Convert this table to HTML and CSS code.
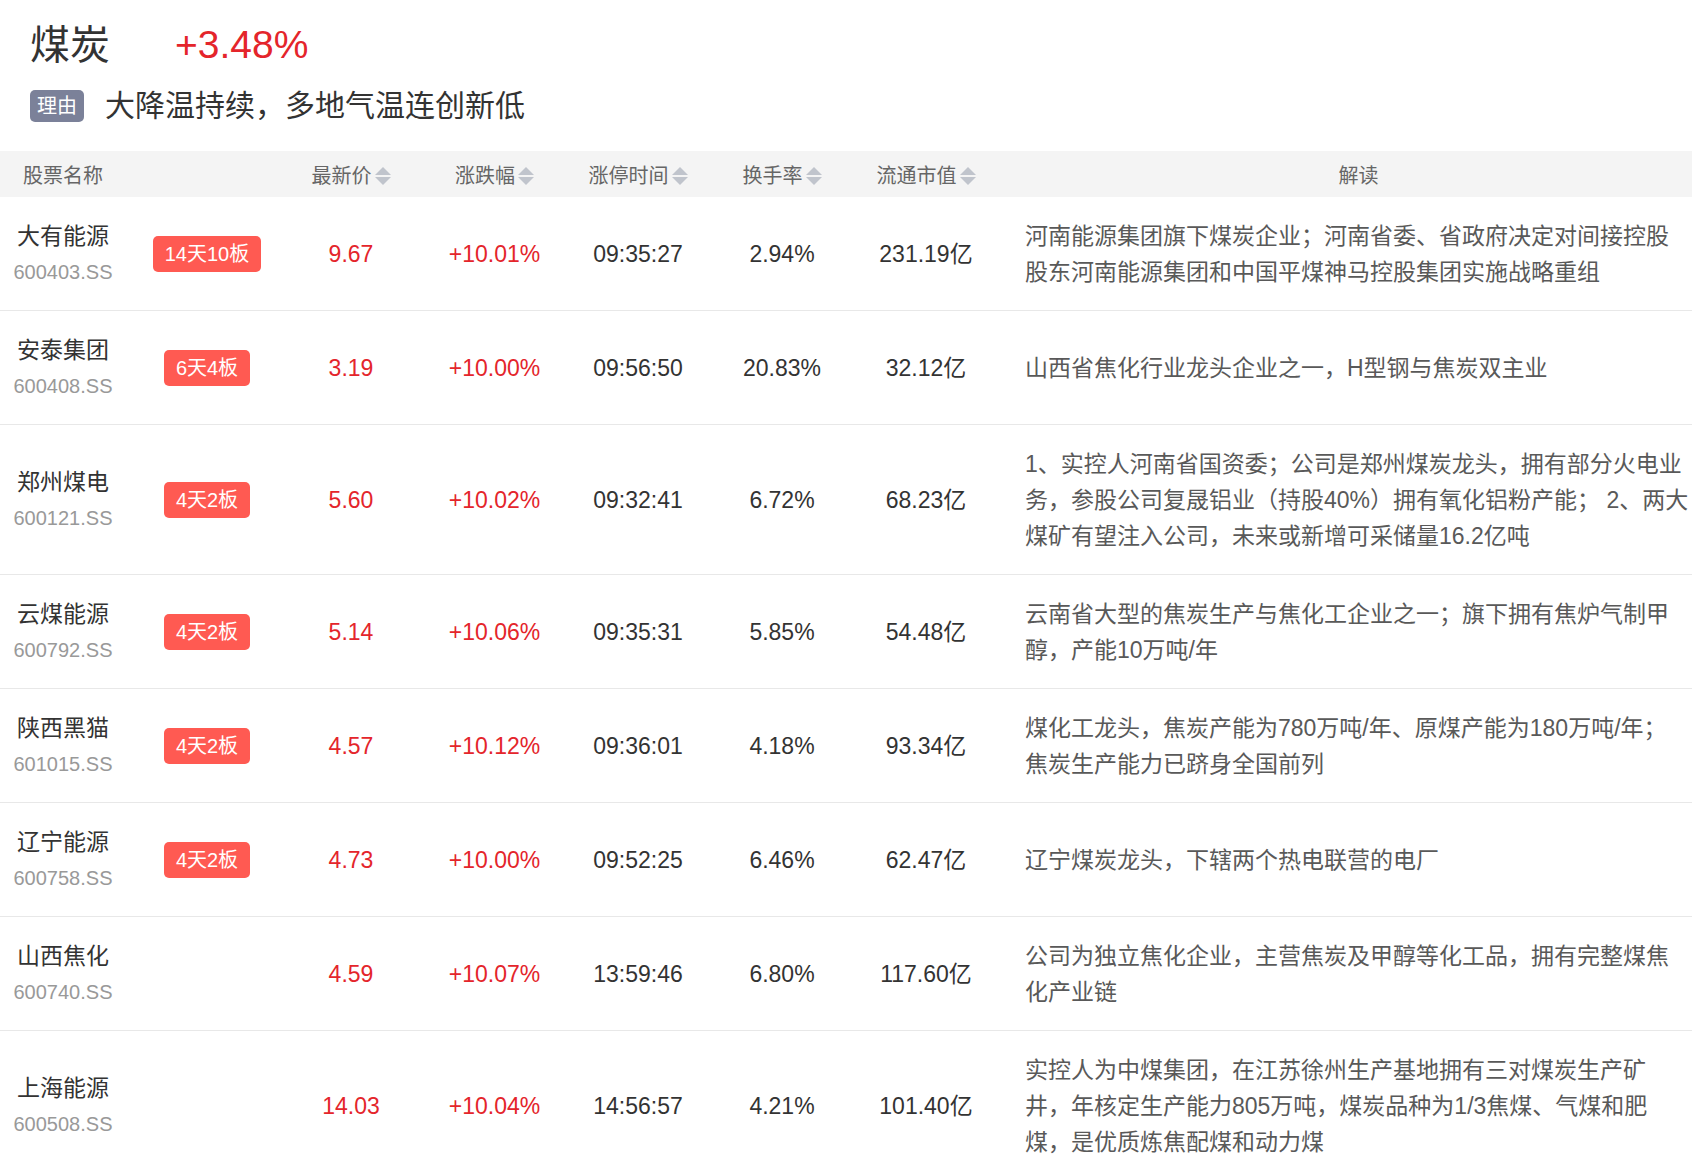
FILE: index.html
```html
<!DOCTYPE html>
<html lang="zh-CN">
<head>
<meta charset="utf-8">
<title>煤炭</title>
<link rel="stylesheet" href="styles.css">
</head>
<body>
<section class="top">
  <div class="title">
    <span class="sector">煤炭</span>
    <span class="pct">+3.48%</span>
  </div>
  <div class="reason">
    <span class="reason-tag">理由</span>
    <span class="reason-text">大降温持续，多地气温连创新低</span>
  </div>
</section>

<section class="table">
  <div class="row head">
    <div class="cell c-name left-head">股票名称</div>
    <div class="cell"></div>
    <div class="cell">最新价<svg class="sort" viewBox="0 0 16 20"><path d="M8 1L16 9H0z"/><path d="M0 11H16L8 19z"/></svg></div>
    <div class="cell">涨跌幅<svg class="sort" viewBox="0 0 16 20"><path d="M8 1L16 9H0z"/><path d="M0 11H16L8 19z"/></svg></div>
    <div class="cell">涨停时间<svg class="sort" viewBox="0 0 16 20"><path d="M8 1L16 9H0z"/><path d="M0 11H16L8 19z"/></svg></div>
    <div class="cell">换手率<svg class="sort" viewBox="0 0 16 20"><path d="M8 1L16 9H0z"/><path d="M0 11H16L8 19z"/></svg></div>
    <div class="cell">流通市值<svg class="sort" viewBox="0 0 16 20"><path d="M8 1L16 9H0z"/><path d="M0 11H16L8 19z"/></svg></div>
    <div class="cell c-desc-head">解读</div>
  </div>

  <div class="row">
    <div class="cell c-name"><div class="stock">大有能源</div><div class="code">600403.SS</div></div>
    <div class="cell"><span class="badge">14天10板</span></div>
    <div class="cell red">9.67</div>
    <div class="cell red">+10.01%</div>
    <div class="cell">09:35:27</div>
    <div class="cell">2.94%</div>
    <div class="cell">231.19亿</div>
    <div class="cell c-desc">河南能源集团旗下煤炭企业；河南省委、省政府决定对间接控股<br>股东河南能源集团和中国平煤神马控股集团实施战略重组</div>
  </div>

  <div class="row">
    <div class="cell c-name"><div class="stock">安泰集团</div><div class="code">600408.SS</div></div>
    <div class="cell"><span class="badge">6天4板</span></div>
    <div class="cell red">3.19</div>
    <div class="cell red">+10.00%</div>
    <div class="cell">09:56:50</div>
    <div class="cell">20.83%</div>
    <div class="cell">32.12亿</div>
    <div class="cell c-desc">山西省焦化行业龙头企业之一，H型钢与焦炭双主业</div>
  </div>

  <div class="row">
    <div class="cell c-name"><div class="stock">郑州煤电</div><div class="code">600121.SS</div></div>
    <div class="cell"><span class="badge">4天2板</span></div>
    <div class="cell red">5.60</div>
    <div class="cell red">+10.02%</div>
    <div class="cell">09:32:41</div>
    <div class="cell">6.72%</div>
    <div class="cell">68.23亿</div>
    <div class="cell c-desc">1、实控人河南省国资委；公司是郑州煤炭龙头，拥有部分火电业<br>务，参股公司复晟铝业（持股40%）拥有氧化铝粉产能； 2、两大<br>煤矿有望注入公司，未来或新增可采储量16.2亿吨</div>
  </div>

  <div class="row">
    <div class="cell c-name"><div class="stock">云煤能源</div><div class="code">600792.SS</div></div>
    <div class="cell"><span class="badge">4天2板</span></div>
    <div class="cell red">5.14</div>
    <div class="cell red">+10.06%</div>
    <div class="cell">09:35:31</div>
    <div class="cell">5.85%</div>
    <div class="cell">54.48亿</div>
    <div class="cell c-desc">云南省大型的焦炭生产与焦化工企业之一；旗下拥有焦炉气制甲<br>醇，产能10万吨/年</div>
  </div>

  <div class="row">
    <div class="cell c-name"><div class="stock">陕西黑猫</div><div class="code">601015.SS</div></div>
    <div class="cell"><span class="badge">4天2板</span></div>
    <div class="cell red">4.57</div>
    <div class="cell red">+10.12%</div>
    <div class="cell">09:36:01</div>
    <div class="cell">4.18%</div>
    <div class="cell">93.34亿</div>
    <div class="cell c-desc">煤化工龙头，焦炭产能为780万吨/年、原煤产能为180万吨/年；<br>焦炭生产能力已跻身全国前列</div>
  </div>

  <div class="row">
    <div class="cell c-name"><div class="stock">辽宁能源</div><div class="code">600758.SS</div></div>
    <div class="cell"><span class="badge">4天2板</span></div>
    <div class="cell red">4.73</div>
    <div class="cell red">+10.00%</div>
    <div class="cell">09:52:25</div>
    <div class="cell">6.46%</div>
    <div class="cell">62.47亿</div>
    <div class="cell c-desc">辽宁煤炭龙头，下辖两个热电联营的电厂</div>
  </div>

  <div class="row">
    <div class="cell c-name"><div class="stock">山西焦化</div><div class="code">600740.SS</div></div>
    <div class="cell"></div>
    <div class="cell red">4.59</div>
    <div class="cell red">+10.07%</div>
    <div class="cell">13:59:46</div>
    <div class="cell">6.80%</div>
    <div class="cell">117.60亿</div>
    <div class="cell c-desc">公司为独立焦化企业，主营焦炭及甲醇等化工品，拥有完整煤焦<br>化产业链</div>
  </div>

  <div class="row">
    <div class="cell c-name"><div class="stock">上海能源</div><div class="code">600508.SS</div></div>
    <div class="cell"></div>
    <div class="cell red">14.03</div>
    <div class="cell red">+10.04%</div>
    <div class="cell">14:56:57</div>
    <div class="cell">4.21%</div>
    <div class="cell">101.40亿</div>
    <div class="cell c-desc">实控人为中煤集团，在江苏徐州生产基地拥有三对煤炭生产矿<br>井，年核定生产能力805万吨，煤炭品种为1/3焦煤、气煤和肥<br>煤，是优质炼焦配煤和动力煤</div>
  </div>
</section>
</body>
</html>
```

FILE: styles.css
```css
html {
  overflow: hidden;
}

body {
  margin: 0;
  background: #ffffff;
  color: #333333;
  font-family: "Liberation Sans", "Noto Sans CJK SC", sans-serif;
}

.top {
  padding: 20px 0 29px 30px;
}

.title {
  display: flex;
  align-items: center;
  height: 50px;
}

.sector {
  font-size: 40px;
  line-height: 50px;
  color: #333333;
}

.pct {
  margin-left: 65px;
  font-size: 39px;
  line-height: 50px;
  color: #e4252b;
}

.reason {
  display: flex;
  align-items: center;
  margin-top: 20px;
  height: 32px;
}

.reason-tag {
  display: inline-block;
  padding: 0 7px;
  height: 32px;
  line-height: 32px;
  font-size: 20px;
  color: #ffffff;
  background: #7b8199;
  border-radius: 5px;
}

.reason-text {
  margin-left: 21px;
  font-size: 30px;
  line-height: 32px;
  color: #333333;
}

.table {
  overflow: hidden;
}

.row {
  display: grid;
  grid-template-columns: 135px 144px 144px 143px 144px 144px 144px 1fr;
  align-items: center;
  padding: 21px 0 20px;
  border-bottom: 1px solid #e8e8e8;
}

.row.head {
  height: 46px;
  box-sizing: border-box;
  padding: 4px 0 0;
  border-bottom: none;
  background: #f4f4f4;
}

.cell {
  display: flex;
  align-items: center;
  justify-content: center;
  font-size: 23px;
  line-height: 36px;
  color: #333333;
  white-space: nowrap;
}

.head .cell {
  font-size: 20px;
  line-height: 42px;
  color: #666666;
}

.sort {
  width: 16px;
  height: 20px;
  margin-left: 3px;
  fill: #c0c4cc;
}

.c-name {
  flex-direction: column;
  padding-right: 9px;
}

.left-head {
  flex-direction: row;
}

.stock {
  font-size: 23px;
  line-height: 36px;
  color: #333333;
}

.code {
  font-size: 20px;
  line-height: 36px;
  color: #999999;
}

.badge {
  display: inline-block;
  height: 36px;
  line-height: 36px;
  padding: 0 12px;
  font-size: 20px;
  color: #ffffff;
  background: #ff5a52;
  border-radius: 5px;
}

.red {
  color: #e4252b;
}

.c-desc {
  display: block;
  padding-left: 27px;
  color: #595959;
  font-size: 23px;
  line-height: 36px;
}

.c-desc-head {
  padding-left: 27px;
}
```
